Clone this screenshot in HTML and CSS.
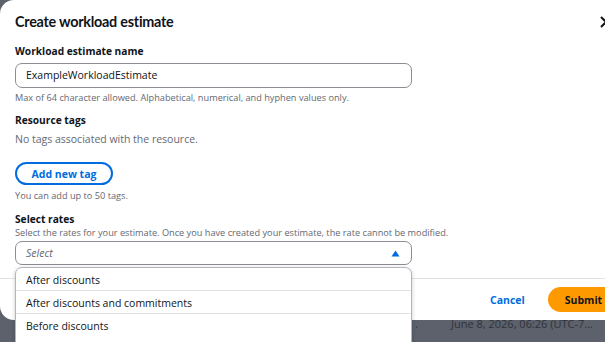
FILE: index.html
```html
<!DOCTYPE html>
<html>
<head>
<meta charset="utf-8">
<link rel="stylesheet" href="styles.css">
</head>
<body>
<div class="page">
  <div class="page-row"><span class="dot">.</span><span class="date">June 8, 2026, 06:26 (UTC-7...</span></div>
</div>
<div class="modal">
  <div class="modal-head">
    <h1 class="title">Create workload estimate</h1>
    <svg class="close" width="12" height="12" viewBox="0 0 12 12"><path d="M1 1L11 11M11 1L1 11" stroke="#0f141a" stroke-width="2" fill="none"/></svg>
  </div>
  <div class="modal-body">
    <div class="field f-name">
      <div class="label">Workload estimate name</div>
      <div class="input">ExampleWorkloadEstimate</div>
      <div class="hint">Max of 64 character allowed. Alphabetical, numerical, and hyphen values only.</div>
    </div>
    <div class="field f-tags">
      <div class="label">Resource tags</div>
      <div class="empty">No tags associated with the resource.</div>
      <button class="btn-outline">Add new tag</button>
      <div class="hint">You can add up to 50 tags.</div>
    </div>
    <div class="field f-rates">
      <div class="label">Select rates</div>
      <div class="hint desc">Select the rates for your estimate. Once you have created your estimate, the rate cannot be modified.</div>
      <div class="select-wrap">
        <div class="select"><span class="placeholder">Select</span>
          <svg class="caret" width="9" height="7" viewBox="0 0 9 7"><path d="M4.5 0.5L8.5 6.5H0.5Z" fill="#006ce0"/></svg>
        </div>
        <ul class="dropdown">
          <li>After discounts</li>
          <li>After discounts and commitments</li>
          <li>Before discounts</li>
        </ul>
      </div>
    </div>
  </div>
  <div class="modal-foot">
    <button class="btn-link">Cancel</button>
    <button class="btn-primary">Submit</button>
  </div>
</div>
</body>
</html>
```

FILE: styles.css
```css
html, body {
  margin: 0;
  padding: 0;
}
body {
  width: 605px;
  height: 342px;
  overflow: hidden;
  position: relative;
  background: #5c616b;
  font-family: "Open Sans", "Liberation Sans", sans-serif;
  color: #0f141a;
}
.page {
  height: 342px;
  display: flex;
  flex-direction: column;
  justify-content: flex-end;
}
.page-row {
  height: 22px;
  display: flex;
  align-items: center;
  padding-left: 415px;
  padding-bottom: 8px;
  font-size: 11px;
  color: #30333a;
  white-space: nowrap;
}
.dot { width: 36px; }
.modal {
  position: absolute;
  left: 0;
  top: 0;
  width: 640px;
  height: 320px;
  background: #fff;
  border-radius: 14px;
  display: flex;
  flex-direction: column;
}
.modal-head {
  display: flex;
  align-items: center;
  justify-content: space-between;
  padding: 10px 28px 0 15px;
  height: 23px;
}
.title {
  margin: 0;
  font-family: Lato, "Open Sans", sans-serif;
  font-size: 14.4px;
  letter-spacing: -0.25px;
  font-weight: 700;
}
.modal-body {
  padding: 0 15px;
  flex: 1;
}
.field { display: flex; flex-direction: column; align-items: flex-start; }
.label {
  font-size: 10.2px;
  font-weight: 700;
  line-height: 14px;
}
.f-name { margin-top: 11px; }
.f-name .label { margin-bottom: 5px; }
.input {
  box-sizing: border-box;
  width: 397px;
  height: 25px;
  border: 1px solid #8c8c94;
  border-radius: 7px;
  padding-left: 10px;
  font-size: 10.5px;
  line-height: 23px;
}
.hint {
  font-size: 9.2px;
  color: #656871;
  line-height: 12px;
  margin-top: 4px;
}
.f-tags { margin-top: 9px; }
.empty {
  font-size: 10.5px;
  color: #656871;
  margin-top: 5px;
  line-height: 14px;
}
.btn-outline {
  margin-top: 16px;
  box-sizing: border-box;
  width: 98px;
  height: 23px;
  border: 2px solid #006ce0;
  border-radius: 12px;
  background: #fff;
  color: #006ce0;
  font-family: inherit;
  font-weight: 700;
  font-size: 10.5px;
  padding: 0;
}
.f-tags .hint { margin-top: 5px; }
.f-rates { margin-top: 10px; }
.f-rates .desc { margin-top: 1px; }
.select-wrap { position: relative; margin-top: 2px; }
.select {
  box-sizing: border-box;
  width: 397px;
  height: 24px;
  border: 1px solid #8c8c94;
  border-radius: 7px;
  padding: 0 11px 0 10px;
  display: flex;
  align-items: center;
  justify-content: space-between;
}
.placeholder {
  font-size: 10.5px;
  font-style: italic;
  color: #656871;
}
.dropdown {
  position: absolute;
  left: 0;
  top: 26px;
  width: 397px;
  box-sizing: border-box;
  margin: 0;
  padding: 0;
  list-style: none;
  background: #fff;
  border: 1px solid #b4b4bb;
  border-radius: 7px 7px 0 0;
  box-shadow: 0 1px 4px rgba(0, 7, 22, 0.2);
  z-index: 2;
}
.dropdown li {
  height: 23px;
  line-height: 24px;
  padding-left: 10px;
  font-size: 10.5px;
  border-bottom: 1px solid #e2e2e5;
  box-sizing: border-box;
}
.dropdown li:last-child { height: 30px; border-bottom: 0; }
.modal-foot {
  border-top: 1px solid #e2e2e5;
  height: 41px;
  display: flex;
  align-items: center;
  padding-left: 490px;
  gap: 23px;
}
.btn-link {
  border: 0;
  background: none;
  padding: 0;
  color: #006ce0;
  font-family: inherit;
  font-weight: 700;
  font-size: 10.5px;
}
.btn-primary {
  border: 0;
  background: #ff9900;
  border-radius: 13px;
  height: 25px;
  width: 80px;
  padding: 0 0 0 17px;
  text-align: left;
  color: #0f141a;
  font-family: inherit;
  font-weight: 700;
  font-size: 10.5px;
}
```
